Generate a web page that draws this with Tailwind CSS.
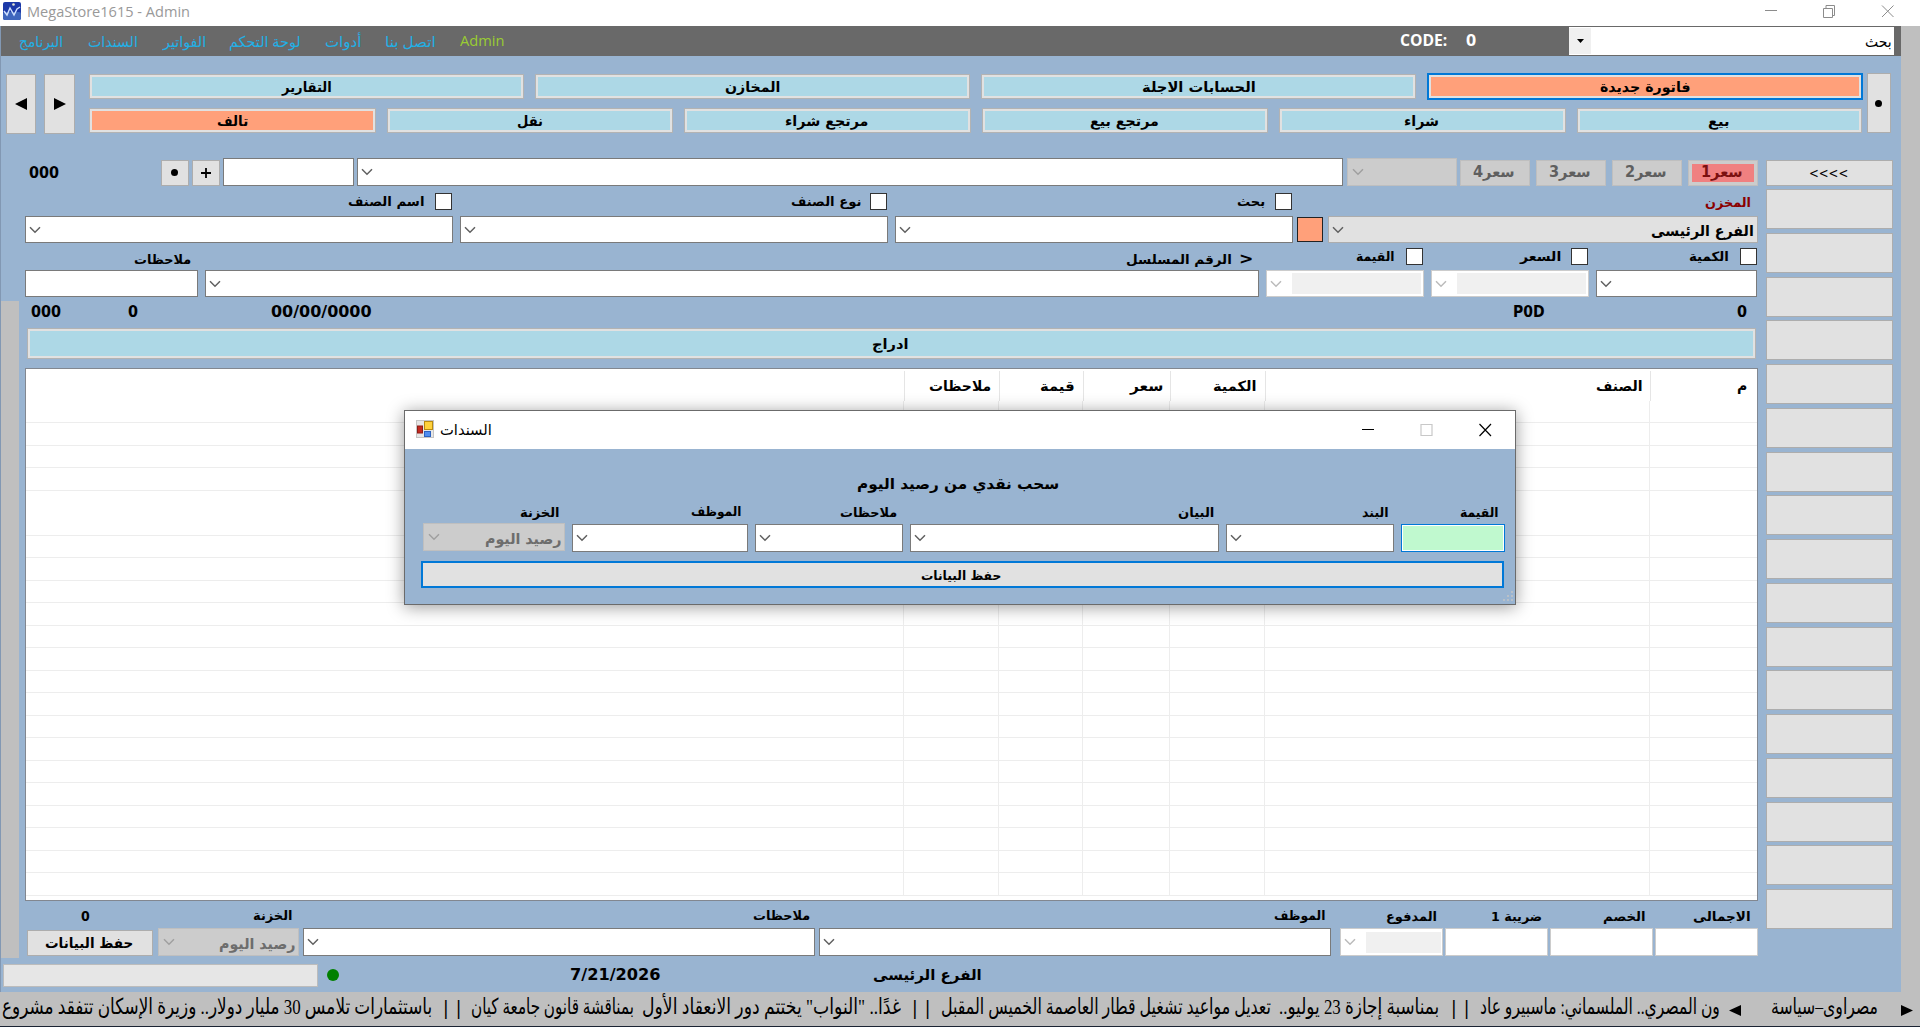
<!DOCTYPE html>
<html lang="ar">
<head>
<meta charset="utf-8">
<title>MegaStore1615 - Admin</title>
<script src="https://cdn.jsdelivr.net/npm/@tailwindcss/browser@4"></script>
</head>
<body class="w-[1920px] h-[1027px] overflow-hidden bg-[#99b4d1] flex flex-col whitespace-nowrap text-black font-bold text-[13px] leading-none font-['DejaVu_Sans_Condensed','DejaVu_Sans',sans-serif] [&_*]:shrink-0">
<svg class="hidden">
  <symbol id="chev" viewBox="0 0 12 8"><path d="M1 1.2 L6 6.2 L11 1.2" fill="none" stroke="currentColor" stroke-width="1.5"/></symbol>
</svg>

<!-- title bar -->
<header class="h-[26px] bg-white flex items-center font-normal text-[#999]">
  <svg class="ml-[3px] mb-1 w-[18px] h-[18px]" viewBox="0 0 18 18"><rect width="18" height="18" rx="2" fill="#1c39a8"/><rect y="10" width="18" height="8" rx="2" fill="#3f66bd"/><path d="M1 9l3 4 3-7 4 7 3-6 3-2" fill="none" stroke="#cfe0ff" stroke-width="1.4"/><circle cx="10.500" cy="2.500" r="1.300" fill="#e8e8d0"/></svg>
  <div data-fit class="ml-[6px] mb-[3px] w-[163px] text-[15px] font-['Open_Sans']">MegaStore1615 - Admin</div>
  <svg class="ml-[1575px] mb-1 w-[130px] h-[16px]" viewBox="0 0 130 16" fill="none" stroke="#8c8c8c"><path d="M0 7.500h12M58.500 5.500h9v9h-9zM61 5v-2.500h8.500v10h-2M117 2.500l11.500 11.500M128.500 2.500l-11.500 11.500"/></svg>
</header>

<div class="flex h-[966px]">
<div class="w-[1901px] border-l border-[#8298b3]">

<!-- menu bar -->
<nav class="h-[30px] bg-[#696969] flex items-center font-normal text-[15px] text-[#22b0e6] font-['Open_Sans','DejaVu_Sans',sans-serif]">
  <div data-fit class="ml-[18px] w-[44px]">البرنامج</div>
  <div data-fit class="ml-[25px] w-[50px]">السندات</div>
  <div data-fit class="ml-[25px] w-[43px]">الفواتير</div>
  <div data-fit class="ml-[23px] w-[72px]">لوحة التحكم</div>
  <div data-fit class="ml-[24px] w-[36px]">أدوات</div>
  <div data-fit class="ml-[24px] w-[51px]">اتصل بنا</div>
  <div data-fit class="ml-[24px] mb-[2px] w-[45px] text-[#9acd32]">Admin</div>
  <div data-fit class="ml-[895px] mb-[2px] w-[47px] text-white font-bold text-[16px]">CODE:</div>
  <div data-fit class="ml-[19px] mb-[2px] w-[10px] text-white font-bold text-[16px]">0</div>
  <div class="ml-[93px] w-[325px] h-[28px] bg-white flex items-center text-black">
    <div class="w-[22px] h-[26px] bg-[#f0f0f0] flex items-center justify-center"><svg class="w-[7px] h-[4px]" viewBox="0 0 7 4"><path d="M0 0h7L3.500 4z"/></svg></div>
    <div data-fit class="ml-[274px] w-[27px]">بحث</div>
  </div>
</nav>

<!-- navigation buttons -->
<section class="pt-[17px] h-[102px] flex text-[14px]">
  <button class="ml-[5px] mt-px w-[30px] h-[60px] bg-[#e1e1e1] border border-[#adadad] flex items-center justify-center"><svg class="w-[12px] h-[12px]" viewBox="0 0 12 12"><path d="M0 6L12 0v12z"/></svg></button>
  <button class="ml-[8px] mt-px w-[31px] h-[60px] bg-[#e1e1e1] border border-[#adadad] flex items-center justify-center"><svg class="w-[12px] h-[12px]" viewBox="0 0 12 12"><path d="M12 6L0 0v12z"/></svg></button>
  <div class="ml-[14px] w-[1774px] pt-px">
    <div class="flex h-[25px] gap-[11px]">
      <button class="w-[435px] border border-[#b3b3b3] bg-[#e1e1e1] p-[2px]"><span class="h-full bg-[#add8e6] flex items-center justify-center"><span data-fit class="w-[50px]">التقارير</span></span></button>
      <button class="w-[435px] border border-[#b3b3b3] bg-[#e1e1e1] p-[2px]"><span class="h-full bg-[#add8e6] flex items-center justify-center"><span data-fit class="w-[55px]">المخازن</span></span></button>
      <button class="w-[435px] border border-[#b3b3b3] bg-[#e1e1e1] p-[2px]"><span class="h-full bg-[#add8e6] flex items-center justify-center"><span data-fit class="w-[114px]">الحسابات الاجلة</span></span></button>
      <button class="-mt-px w-[436px] h-[27px] border-2 border-[#0078d7] bg-[#e1e1e1] p-[2px]"><span class="h-full bg-[#ffa07a] flex items-center justify-center"><span data-fit class="w-[90px]">فاتورة جديدة</span></span></button>
    </div>
    <div class="mt-[9px] flex h-[25px] gap-[11px]">
      <button class="w-[286.500px] border border-[#b3b3b3] bg-[#e1e1e1] p-[2px]"><span class="h-full bg-[#ffa07a] flex items-center justify-center"><span data-fit class="w-[31px]">تالف</span></span></button>
      <button class="w-[286.500px] border border-[#b3b3b3] bg-[#e1e1e1] p-[2px]"><span class="h-full bg-[#add8e6] flex items-center justify-center"><span data-fit class="w-[26px]">نقل</span></span></button>
      <button class="w-[286.500px] border border-[#b3b3b3] bg-[#e1e1e1] p-[2px]"><span class="h-full bg-[#add8e6] flex items-center justify-center"><span data-fit class="mr-[2px] w-[83px]">مرتجع شراء</span></span></button>
      <button class="w-[286.500px] border border-[#b3b3b3] bg-[#e1e1e1] p-[2px]"><span class="h-full bg-[#add8e6] flex items-center justify-center"><span data-fit class="w-[69px]">مرتجع بيع</span></span></button>
      <button class="w-[286.500px] border border-[#b3b3b3] bg-[#e1e1e1] p-[2px]"><span class="h-full bg-[#add8e6] flex items-center justify-center"><span data-fit class="mr-[2px] w-[35px]">شراء</span></span></button>
      <button class="w-[285px] border border-[#b3b3b3] bg-[#e1e1e1] p-[2px]"><span class="h-full bg-[#add8e6] flex items-center justify-center"><span data-fit class="mr-[2px] w-[21px]">بيع</span></span></button>
    </div>
  </div>
  <button class="ml-[4px] w-[24px] h-[60px] bg-[#e1e1e1] border border-[#adadad] flex items-center justify-center"><span class="mr-[2px] size-[7px] rounded-full bg-black"></span></button>
</section>

<div class="flex h-[800px]">
<main class="w-[1764px]">
  <!-- barcode and price row -->
  <div class="h-[28px] flex items-center text-[16px]">
    <div data-fit class="ml-[28px] mt-[2px] w-[30px]">000</div>
    <button class="ml-[102px] w-[28px] h-[26px] mt-px bg-[#e1e1e1] border border-[#adadad] flex items-center justify-center"><span class="mr-[2px] size-[7px] rounded-full bg-black"></span></button>
    <button class="ml-[3px] w-[28px] h-[26px] mt-px bg-[#e1e1e1] border border-[#adadad] flex items-center justify-center"><svg class="size-[10px]" viewBox="0 0 10 10"><path d="M5 0v10M0 5h10" stroke="#000" stroke-width="1.800"/></svg></button>
    <div class="ml-[3px] w-[131px] h-full bg-white border border-[#7a7a7a]"></div>
    <div class="ml-[3px] w-[986px] h-full bg-white border border-[#7a7a7a] flex items-center pl-[3px] text-[#606060]"><svg class="w-[12px] h-[8px]"><use href="#chev"/></svg></div>
    <div class="ml-[4px] w-[110px] h-full bg-[#ccc] border border-[#bfbfbf] flex items-center pl-[4px] text-[#a0a0a0]"><svg class="w-[12px] h-[8px]"><use href="#chev"/></svg></div>
    <button class="ml-[3px] mt-px w-[70px] h-[26px] bg-[#ccc] border border-[#bfbfbf] flex items-center justify-center text-[#5f5f5f]"><span data-fit class="mr-[3px] w-[42px] text-[15px]">سعر4</span></button>
    <button class="ml-[6px] mt-px w-[70px] h-[26px] bg-[#ccc] border border-[#bfbfbf] flex items-center justify-center text-[#5f5f5f]"><span data-fit class="mr-[3px] w-[42px] text-[15px]">سعر3</span></button>
    <button class="ml-[6px] mt-px w-[70px] h-[26px] bg-[#ccc] border border-[#bfbfbf] flex items-center justify-center text-[#5f5f5f]"><span data-fit class="mr-[3px] w-[42px] text-[15px]">سعر2</span></button>
    <button class="ml-[6px] mt-px w-[70px] h-[26px] bg-[#ccc] border border-[#bfbfbf] p-[3px] text-[#7c1010]"><span class="h-full bg-[#f08080] flex items-center justify-center"><span data-fit class="mr-[2px] w-[42px] text-[15px]">سعر1</span></span></button>
  </div>
  <!-- item filter captions -->
  <div class="h-[30px] flex items-center">
    <div data-fit class="ml-[347px] w-[76px]">اسم الصنف</div>
    <div class="ml-[11px] w-[17px] h-[17px] bg-white border border-[#333]"></div>
    <div data-fit class="ml-[339px] w-[70px]">نوع الصنف</div>
    <div class="ml-[9px] w-[17px] h-[17px] bg-white border border-[#333]"></div>
    <div data-fit class="ml-[350px] w-[28px]">بحث</div>
    <div class="ml-[10px] w-[17px] h-[17px] bg-white border border-[#333]"></div>
    <div data-fit class="ml-[413px] mt-[3px] w-[46px] text-[#8b0000]">المخزن</div>
  </div>
  <div class="h-[27px] flex text-[#606060]">
    <div class="ml-[24px] w-[428px] bg-white border border-[#7a7a7a] flex items-center pl-[3px]"><svg class="w-[12px] h-[8px]"><use href="#chev"/></svg></div>
    <div class="ml-[7px] w-[428px] bg-white border border-[#7a7a7a] flex items-center pl-[3px]"><svg class="w-[12px] h-[8px]"><use href="#chev"/></svg></div>
    <div class="ml-[7px] w-[398px] bg-white border border-[#7a7a7a] flex items-center pl-[3px]"><svg class="w-[12px] h-[8px]"><use href="#chev"/></svg></div>
    <div class="ml-[4px] mt-px w-[26px] h-[25px] bg-[#ffa07a] border border-[#222]"></div>
    <div class="ml-[5px] w-[430px] bg-[#e1e1e1] border border-[#adadad] flex items-center pl-[3px]"><svg class="w-[12px] h-[8px]"><use href="#chev"/></svg><div data-fit class="ml-[307px] mt-[3px] w-[103px] text-[15px] text-black">الفرع الرئيسى</div></div>
  </div>
  <!-- quantity captions -->
  <div class="h-[27px] flex items-center">
    <div data-fit class="ml-[133px] mt-[5px] w-[57px]">ملاحظات</div>
    <div data-fit class="ml-[935px] mt-[5px] w-[106px]">الرقم المسلسل</div>
    <div data-fit class="ml-[7px] mt-[5px] w-[14px] text-[15px]">&gt;</div>
    <div data-fit class="ml-[103px] w-[39px]">القيمة</div>
    <div class="ml-[11px] w-[17px] h-[17px] bg-white border border-[#333]"></div>
    <div data-fit class="ml-[97px] w-[41px]">السعر</div>
    <div class="ml-[10px] w-[17px] h-[17px] bg-white border border-[#333]"></div>
    <div data-fit class="ml-[101px] w-[40px]">الكمية</div>
    <div class="ml-[11px] w-[17px] h-[17px] bg-white border border-[#333]"></div>
  </div>
  <div class="h-[27px] mb-[4px] flex text-[#606060]">
    <div class="ml-[24px] w-[173px] bg-white border border-[#7a7a7a]"></div>
    <div class="ml-[7px] w-[1054px] bg-white border border-[#7a7a7a] flex items-center pl-[3px]"><svg class="w-[12px] h-[8px]"><use href="#chev"/></svg></div>
    <div class="ml-[7px] w-[158px] bg-white border border-[#ccc] flex items-center pl-[3px] text-[#bbb]"><svg class="w-[12px] h-[8px]"><use href="#chev"/></svg><div class="ml-[10px] w-[129px] h-[21px] bg-[#f0f0f0]"></div></div>
    <div class="ml-[7px] w-[158px] bg-white border border-[#ccc] flex items-center pl-[3px] text-[#bbb]"><svg class="w-[12px] h-[8px]"><use href="#chev"/></svg><div class="ml-[10px] w-[129px] h-[21px] bg-[#f0f0f0]"></div></div>
    <div class="ml-[7px] w-[161px] bg-white border border-[#7a7a7a] flex items-center pl-[3px]"><svg class="w-[12px] h-[8px]"><use href="#chev"/></svg></div>
  </div>

  <div class="flex h-[657px]">
    <div class="w-[18px] bg-[#bfbfbf]"></div>
    <div class="w-[1746px]">
      <div class="h-[27px] pt-[3px] flex items-start text-[16px]">
        <div data-fit class="ml-[12px] w-[30px]">000</div>
        <div data-fit class="ml-[67px] w-[10px]">0</div>
        <div data-fit class="ml-[133px] w-[101px]">00/00/0000</div>
        <div data-fit class="ml-[1141px] w-[32px]">P0D</div>
        <div data-fit class="ml-[192px] w-[10px]">0</div>
      </div>
      <button class="block ml-[8px] w-[1729px] h-[31px] border border-[#b3b3b3] bg-[#e1e1e1] p-[2px]"><span class="h-full bg-[#add8e6] flex items-center justify-center text-[14px]"><span data-fit class="mt-px mr-[3px] w-[36px]">ادراج</span></span></button>

      <!-- invoice lines -->
      <div class="relative mt-[9px] ml-[6px] w-[1733px] h-[533px] bg-white border border-[#828790] text-[14px]">
        <div class="h-[32px] pt-[2px] flex items-center">
          <div class="w-[879px] h-full border-r border-[#e5e5e5]"></div>
          <div class="w-[95px] h-full border-r border-[#e5e5e5] flex items-center"><div data-fit class="ml-[24px] w-[62px]">ملاحظات</div></div>
          <div class="w-[84px] h-full border-r border-[#e5e5e5] flex items-center"><div data-fit class="ml-[40px] w-[34px]">قيمة</div></div>
          <div class="w-[87px] h-full border-r border-[#e5e5e5] flex items-center"><div data-fit class="ml-[46px] w-[33px]">سعر</div></div>
          <div class="w-[95px] h-full border-r border-[#e5e5e5] flex items-center"><div data-fit class="ml-[42px] w-[44px]">الكمية</div></div>
          <div class="w-[385px] h-full border-r border-[#e5e5e5] flex items-center"><div data-fit class="ml-[330px] w-[47px]">الصنف</div></div>
          <div data-fit class="ml-[86px] w-[10px]">م</div>
        </div>
        <div class="h-[495px] flex bg-[repeating-linear-gradient(#fff_0_21.5px,#ededed_21.5px_22.5px)]">
          <div class="w-[878px] border-r border-[#ededed]"></div>
          <div class="w-[95px] border-r border-[#ededed]"></div>
          <div class="w-[84px] border-r border-[#ededed]"></div>
          <div class="w-[87px] border-r border-[#ededed]"></div>
          <div class="w-[95px] border-r border-[#ededed]"></div>
          <div class="w-[385px] border-r border-[#ededed]"></div>
        </div>

        <!-- floating voucher window -->
        <div class="absolute left-[378px] top-[41px] w-[1112px] h-[195px] bg-[#99b4d1] border border-[#6b6b6b] shadow-[0_2px_16px_rgba(0,0,0,0.4)] text-[13px]">
          <div class="h-[38px] bg-white flex items-center">
            <svg class="ml-[11px] mb-[2px] w-[18px] h-[18px]" viewBox="0 0 18 18"><rect x=".5" y=".5" width="17" height="17" fill="#e6e6e6" stroke="#c4c4c4"/><rect x="1.500" y="6" width="5" height="7" fill="#c32a20" stroke="#8e1c16"/><rect x="8.500" y="1.500" width="8" height="8" fill="#ffd23c" stroke="#b98a10"/><rect x="8.500" y="11.500" width="6" height="5" fill="#4f8df0" stroke="#2b62c0"/></svg>
            <div data-fit class="ml-[6px] w-[52px] text-[15px] font-normal font-['DejaVu_Sans']">السندات</div>
            <svg class="ml-[870px] w-[131px] h-[14px]" viewBox="0 0 131 14" fill="none" stroke="#000" stroke-width="1.200"><path d="M0 6.500h12M117.500 1l11.500 12M129 1l-11.500 12"/><path d="M59 1.500h11v11h-11z" stroke="#c8c8c8"/></svg>
          </div>
          <div class="pt-[28px] h-[54px]"><div data-fit class="ml-[452px] w-[202px] text-[15px]">سحب نقدي من رصيد اليوم</div></div>
          <div class="h-[21px] pb-[3px] flex items-center">
            <div data-fit class="ml-[115px] w-[40px]">الخزنة</div>
            <div data-fit class="ml-[131px] -mt-[2px] w-[51px]">الموظف</div>
            <div data-fit class="ml-[98px] w-[57px]">ملاحظات</div>
            <div data-fit class="ml-[281px] w-[36px]">البيان</div>
            <div data-fit class="ml-[148px] w-[27px]">البند</div>
            <div data-fit class="ml-[71px] w-[39px]">القيمة</div>
          </div>
          <div class="h-[28px] flex text-[#606060]">
            <div class="ml-[18px] -mt-px w-[142px] h-[28px] bg-[#ccc] border border-[#bfbfbf] flex items-center pl-[4px] text-[#a0a0a0]"><svg class="w-[12px] h-[8px]"><use href="#chev"/></svg><div data-fit class="ml-[45px] mt-[4px] w-[76px] text-[15px] text-[#6d6d6d]">رصيد اليوم</div></div>
            <div class="ml-[7px] w-[176px] bg-white border border-[#7a7a7a] flex items-center pl-[3px]"><svg class="w-[12px] h-[8px]"><use href="#chev"/></svg></div>
            <div class="ml-[7px] w-[148px] bg-white border border-[#7a7a7a] flex items-center pl-[3px]"><svg class="w-[12px] h-[8px]"><use href="#chev"/></svg></div>
            <div class="ml-[7px] w-[309px] bg-white border border-[#7a7a7a] flex items-center pl-[3px]"><svg class="w-[12px] h-[8px]"><use href="#chev"/></svg></div>
            <div class="ml-[7px] w-[168px] bg-white border border-[#7a7a7a] flex items-center pl-[3px]"><svg class="w-[12px] h-[8px]"><use href="#chev"/></svg></div>
            <div class="ml-[7px] w-[104px] bg-white border border-[#0078d7] p-px"><div class="h-full bg-[#c0f9cf]"></div></div>
          </div>
          <button class="mt-[9px] ml-[16px] w-[1083px] h-[27px] border-2 border-[#0078d7] bg-[#e1e1e1] flex items-center justify-center"><span data-fit class="mt-px mr-[3px] w-[80px]">حفظ البيانات</span></button>
          <svg class="ml-[1098px] mt-[3px] w-[10px] h-[12px]" viewBox="0 0 10 12" fill="#b9c0c8"><path d="M0 8h2v2h-2zM4 8h2v2h-2zM8 8h2v2h-2zM4 4h2v2h-2zM8 4h2v2h-2zM8 0h2v2h-2z"/></svg>
        </div>
      </div>

      <!-- totals -->
      <div class="h-[27px] pt-[2px] flex items-center">
        <div data-fit class="ml-[62px] w-[9px] text-[14px]">0</div>
        <div data-fit class="ml-[163px] w-[40px]">الخزنة</div>
        <div data-fit class="ml-[460px] w-[57px]">ملاحظات</div>
        <div data-fit class="ml-[464px] w-[52px]">الموظف</div>
        <div data-fit class="ml-[60px] mt-[2px] w-[51px]">المدفوع</div>
        <div data-fit class="ml-[54px] mt-[2px] w-[51px]">ضريبة 1</div>
        <div data-fit class="ml-[61px] mt-[2px] w-[43px]">الخصم</div>
        <div data-fit class="ml-[47px] mt-[2px] w-[58px]">الاجمالى</div>
      </div>
      <div class="h-[28px] flex text-[#606060]">
        <button class="ml-[8px] mt-[2px] w-[126px] h-[26px] bg-[#e1e1e1] border border-[#adadad] flex items-center justify-center text-black text-[14px]"><span data-fit class="mr-[2px] w-[88px]">حفظ البيانات</span></button>
        <div class="ml-[5px] w-[141px] bg-[#ccc] border border-[#bfbfbf] flex items-center pl-[4px] text-[#a0a0a0]"><svg class="w-[12px] h-[8px]"><use href="#chev"/></svg><div data-fit class="ml-[44px] mt-[4px] w-[76px] text-[15px] text-[#6d6d6d]">رصيد اليوم</div></div>
        <div class="ml-[4px] w-[512px] bg-white border border-[#7a7a7a] flex items-center pl-[3px]"><svg class="w-[12px] h-[8px]"><use href="#chev"/></svg></div>
        <div class="ml-[4px] w-[512px] bg-white border border-[#7a7a7a] flex items-center pl-[3px]"><svg class="w-[12px] h-[8px]"><use href="#chev"/></svg></div>
        <div class="ml-[9px] w-[103px] bg-white border border-[#ccc] flex items-center pl-[3px] text-[#bbb]"><svg class="w-[12px] h-[8px]"><use href="#chev"/></svg><div class="ml-[10px] w-[75px] h-[21px] bg-[#f0f0f0]"></div></div>
        <div class="ml-[2px] w-[103px] bg-white border border-[#ccc]"></div>
        <div class="ml-[2px] w-[103px] bg-white border border-[#ccc]"></div>
        <div class="ml-[2px] w-[103px] bg-white border border-[#ccc]"></div>
      </div>
    </div>
  </div>
</main>

<!-- quick item buttons -->
<aside class="w-[127px] ml-px pt-[2px]">
  <button class="w-[127px] h-[26px] bg-[#e1e1e1] border border-[#adadad] flex items-center justify-center font-normal text-[14px]"><span data-fit class="mr-[3px] w-[39px]">&lt;&lt;&lt;&lt;</span></button>
  <div class="mt-[3px] h-[740px] flex flex-col justify-between [&>div]:h-[40px] [&>div]:bg-[#e1e1e1] [&>div]:border [&>div]:border-[#adadad]">
    <div></div><div></div><div></div><div></div><div></div><div></div><div></div><div></div><div></div><div></div><div></div><div></div><div></div><div></div><div></div><div></div><div></div>
  </div>
</aside>
</div>

<!-- status bar -->
<footer class="h-[34px] flex items-center text-[16px]">
  <div class="ml-[2px] w-[315px] h-[23px] bg-[#e6e6e6] border border-[#bcbcbc]"></div>
  <div class="ml-[9px] w-[12px] h-[12px] rounded-full bg-[#008000]"></div>
  <div data-fit class="ml-[231px] w-[91px]">7/21/2026</div>
  <div data-fit class="ml-[212px] w-[109px] text-[15px]">الفرع الرئيسى</div>
</footer>
</div>
<div class="w-[19px] bg-[#bfbfbf]"></div>
</div>

<!-- news ticker -->
<div class="h-[34px] pb-[4px] bg-[#bfbfbf] flex items-center font-normal text-[22px] font-['Liberation_Serif','DejaVu_Sans',serif]">
  <div data-fit class="ml-[2px] w-[430px]">باستثمارات تلامس 30 مليار دولار.. وزيرة الإسكان تتفقد مشروع</div>
  <div data-fit class="ml-[11px] w-[18px]">| |</div>
  <div data-fit class="ml-[10px] w-[163px]">بمناقشة قانون جامعة كيان</div>
  <div data-fit class="ml-[8px] w-[259px]">غدًا.. "النواب" يختتم دور الانعقاد الأول</div>
  <div data-fit class="ml-[11px] w-[18px]">| |</div>
  <div data-fit class="ml-[11px] w-[330px]">تعديل مواعيد تشغيل قطار العاصمة الخميس المقبل</div>
  <div data-fit class="ml-[8px] w-[160px]">بمناسبة إجازة 23 يوليو..</div>
  <div data-fit class="ml-[12px] w-[18px]">| |</div>
  <div data-fit class="ml-[11px] w-[240px]">ون المصري.. الملسماني: ماسبيرو عاد</div>
  <svg class="ml-[9px] mt-[7px] w-[12px] h-[11px]" viewBox="0 0 12 11"><path d="M0 5.500L12 0v11z"/></svg>
  <div data-fit class="ml-[30px] w-[107px]">مصراوى–سياسة</div>
  <svg class="ml-[23px] mt-[7px] w-[12px] h-[11px]" viewBox="0 0 12 11"><path d="M12 5.500L0 0v11z"/></svg>
</div>
<div class="h-px bg-[#1b2433]"></div>

<script>
/* Condense or widen every caption so that it fills the width of its own box. */
function fit(box) {
  var s = box.firstElementChild;
  if (box.clientWidth && s.offsetWidth) s.style.transform = 'scaleX(' + box.clientWidth / s.offsetWidth + ')';
}
var watcher = new ResizeObserver(function (entries) {
  entries.forEach(function (e) { fit(e.target.hasAttribute('data-fit') ? e.target : e.target.parentElement); });
});
document.querySelectorAll('[data-fit]').forEach(function (box) {
  var s = document.createElement('span');
  s.textContent = box.textContent;
  s.dir = 'auto';
  s.style.display = 'inline-block';
  s.style.transformOrigin = '0 50%';
  box.style.textAlign = 'left';
  box.textContent = '';
  box.appendChild(s);
  watcher.observe(box);
  watcher.observe(s);
});
window.addEventListener('load', function () { document.querySelectorAll('[data-fit]').forEach(fit); });
</script>
</body>
</html>
